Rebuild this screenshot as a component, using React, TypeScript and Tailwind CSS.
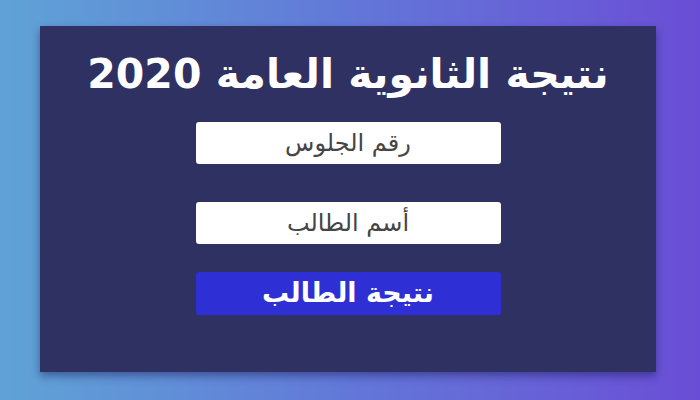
export default function App() {
  return (
    <div
      className="w-[700px] h-[400px] bg-gradient-to-r from-[#5fa3d6] via-[#6277d8] to-[#6a4dd6] pt-[26px] pl-[40px]"
      style={{ fontFamily: '"DejaVu Sans", "Noto Sans", sans-serif' }}
    >
      <div
        dir="rtl"
        className="w-[616px] h-[346px] bg-[#2f3163] shadow-[0_4px_8px_rgba(20,20,80,0.45)] flex flex-col items-center"
      >
        <h1 className="mt-[21px] text-[41px] leading-[54px] font-bold text-white">
          نتيجة الثانوية العامة 2020
        </h1>
        <div className="mt-[21px] w-[305px] h-[42px] bg-white rounded-[3px] flex items-center justify-center text-[24px] text-[#454545]">
          رقم الجلوس
        </div>
        <div className="mt-[38px] w-[305px] h-[42px] bg-white rounded-[3px] flex items-center justify-center text-[24px] text-[#454545]">
          أسم الطالب
        </div>
        <div className="mt-[28px] w-[305px] h-[43px] bg-[#2e2fd4] rounded-[3px] flex items-center justify-center text-[27px] font-bold text-white">
          نتيجة الطالب
        </div>
      </div>
    </div>
  );
}
